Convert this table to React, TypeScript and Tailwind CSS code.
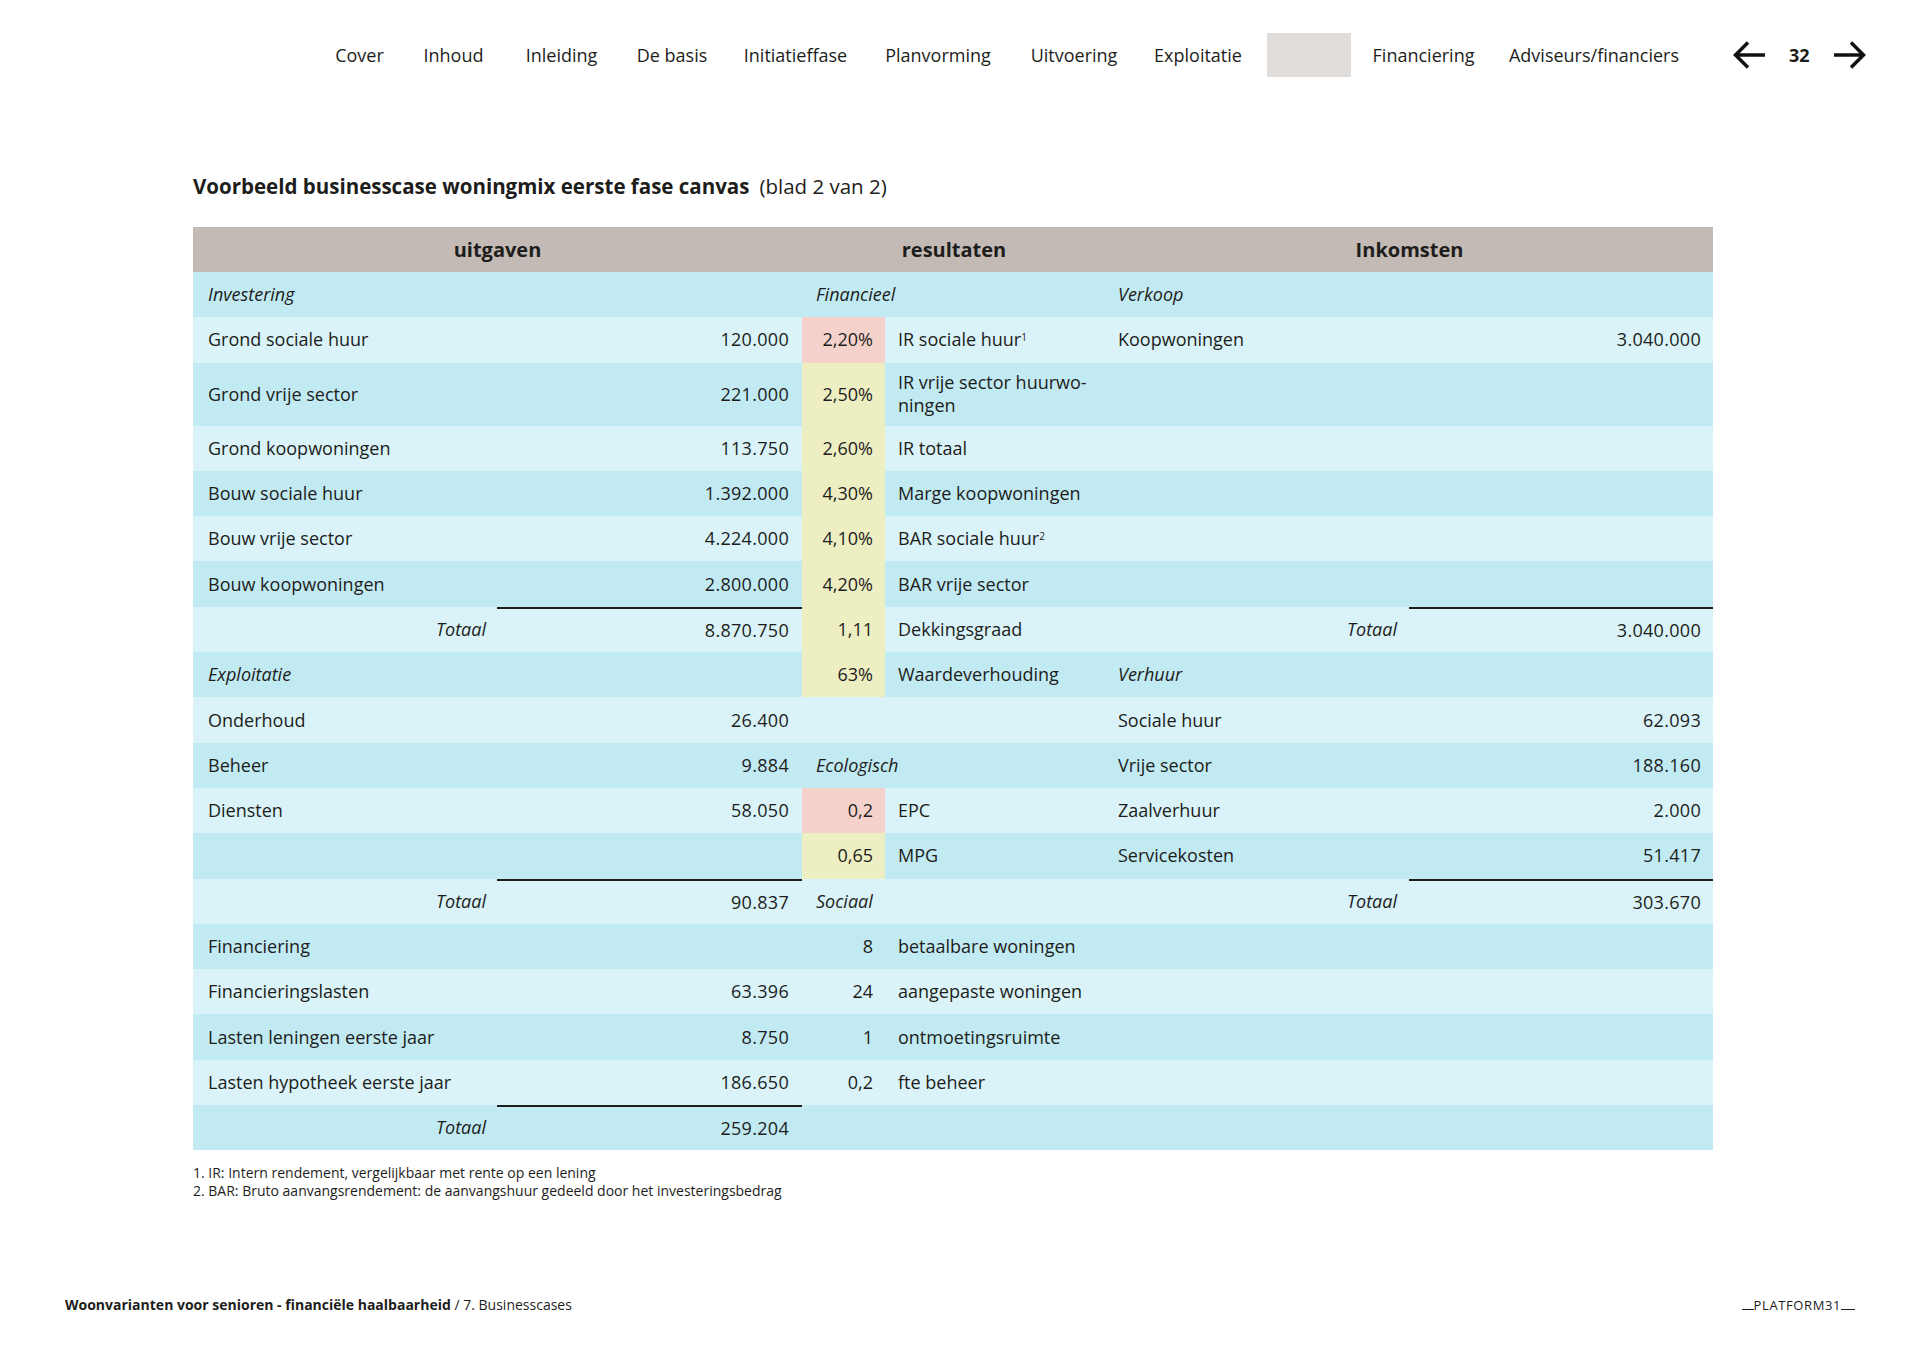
import React from 'react';

type Row = {
  a?: string;
  aItalic?: boolean;
  aTotal?: boolean;
  av?: string;
  bHead?: string;
  bv?: string;
  bColor?: 'pink' | 'yellow';
  bl?: React.ReactNode;
  c?: string;
  cItalic?: boolean;
  cTotal?: boolean;
  cv?: string;
  tall?: boolean;
};

const rows: Row[] = [
  { a: 'Investering', aItalic: true, bHead: 'Financieel', c: 'Verkoop', cItalic: true },
  { a: 'Grond sociale huur', av: '120.000', bv: '2,20%', bColor: 'pink', bl: <>IR sociale huur<sup className="text-[10px]">1</sup></>, c: 'Koopwoningen', cv: '3.040.000' },
  { a: 'Grond vrije sector', av: '221.000', bv: '2,50%', bColor: 'yellow', bl: <>IR vrije sector huurwo-<br />ningen</>, tall: true },
  { a: 'Grond koopwoningen', av: '113.750', bv: '2,60%', bColor: 'yellow', bl: 'IR totaal' },
  { a: 'Bouw sociale huur', av: '1.392.000', bv: '4,30%', bColor: 'yellow', bl: 'Marge koopwoningen' },
  { a: 'Bouw vrije sector', av: '4.224.000', bv: '4,10%', bColor: 'yellow', bl: <>BAR sociale huur<sup className="text-[10px]">2</sup></> },
  { a: 'Bouw koopwoningen', av: '2.800.000', bv: '4,20%', bColor: 'yellow', bl: 'BAR vrije sector' },
  { a: 'Totaal', aTotal: true, av: '8.870.750', bv: '1,11', bColor: 'yellow', bl: 'Dekkingsgraad', c: 'Totaal', cTotal: true, cv: '3.040.000' },
  { a: 'Exploitatie', aItalic: true, bv: '63%', bColor: 'yellow', bl: 'Waardeverhouding', c: 'Verhuur', cItalic: true },
  { a: 'Onderhoud', av: '26.400', c: 'Sociale huur', cv: '62.093' },
  { a: 'Beheer', av: '9.884', bHead: 'Ecologisch', c: 'Vrije sector', cv: '188.160' },
  { a: 'Diensten', av: '58.050', bv: '0,2', bColor: 'pink', bl: 'EPC', c: 'Zaalverhuur', cv: '2.000' },
  { bv: '0,65', bColor: 'yellow', bl: 'MPG', c: 'Servicekosten', cv: '51.417' },
  { a: 'Totaal', aTotal: true, av: '90.837', bHead: 'Sociaal', c: 'Totaal', cTotal: true, cv: '303.670' },
  { a: 'Financiering', bv: '8', bl: 'betaalbare woningen' },
  { a: 'Financieringslasten', av: '63.396', bv: '24', bl: 'aangepaste woningen' },
  { a: 'Lasten leningen eerste jaar', av: '8.750', bv: '1', bl: 'ontmoetingsruimte' },
  { a: 'Lasten hypotheek eerste jaar', av: '186.650', bv: '0,2', bl: 'fte beheer' },
  { a: 'Totaal', aTotal: true, av: '259.204' },
];

const navItems: { label: string; w: string }[] = [
  { label: 'Cover', w: 'w-[87px]' },
  { label: 'Inhoud', w: 'w-[101px]' },
  { label: 'Inleiding', w: 'w-[115px]' },
  { label: 'De basis', w: 'w-[106px]' },
  { label: 'Initiatieffase', w: 'w-[141px]' },
  { label: 'Planvorming', w: 'w-[144px]' },
  { label: 'Uitvoering', w: 'w-[128px]' },
  { label: 'Exploitatie', w: 'w-[120px]' },
];

function TableRow({ r, i }: { r: Row; i: number }) {
  const bg = i % 2 === 0 ? 'bg-[#c1eaf3]' : 'bg-[#d9f3f8]';
  const colored = r.bColor === 'pink' ? 'bg-[#f5d1cc]' : r.bColor === 'yellow' ? 'bg-[#eeeec3]' : '';
  return (
    <div className={`grid grid-cols-[304px_305px_83px_221px_303px_304px] ${r.tall ? 'h-[63px]' : 'h-[45.3px]'} ${bg}`}>
      {r.aTotal ? (
        <div className="flex items-center justify-end pr-[11px] italic">{r.a}</div>
      ) : (
        <div className={`flex items-center pl-[15px] whitespace-nowrap ${r.aItalic ? 'italic' : ''}`}>{r.a}</div>
      )}
      <div className={`flex items-center justify-end pr-[13px] tracking-[0.3px] ${r.aTotal ? 'border-t-2 border-[#1d1d1b]' : ''}`}>{r.av}</div>
      {r.bHead ? (
        <div className="col-span-2 flex items-center pl-[14px] italic">{r.bHead}</div>
      ) : (
        <>
          <div className={`flex items-center justify-end pr-[12px] ${colored}`}>{r.bv}</div>
          <div className="flex items-center pl-[13px] leading-[23px]">
            <span>{r.bl}</span>
          </div>
        </>
      )}
      {r.cTotal ? (
        <div className="flex items-center justify-end pr-[12px] italic">{r.c}</div>
      ) : (
        <div className={`flex items-center pl-[12px] ${r.cItalic ? 'italic' : ''}`}>{r.c}</div>
      )}
      <div className={`flex items-center justify-end pr-[12px] tracking-[0.3px] ${r.cTotal ? 'border-t-2 border-[#1d1d1b]' : ''}`}>{r.cv}</div>
    </div>
  );
}

function Arrow({ dir }: { dir: 'left' | 'right' }) {
  return (
    <svg width="34" height="30" viewBox="0 0 34 30" fill="none" stroke="#111" strokeWidth="3.5" strokeLinecap="butt" strokeLinejoin="miter">
      {dir === 'left' ? (
        <>
          <path d="M33 15H4" />
          <path d="M16 2.5L3.5 15L16 27.5" />
        </>
      ) : (
        <>
          <path d="M1 15H30" />
          <path d="M18 2.5L30.5 15L18 27.5" />
        </>
      )}
    </svg>
  );
}

export default function App() {
  return (
    <div className="w-[1920px] h-[1357px] bg-white flex flex-col text-[#1d1d1b] font-['Open_Sans',sans-serif]">
      <nav className="flex items-center pt-[33px] pl-[316px] h-[77px] text-[18px]">
        {navItems.map((n) => (
          <div key={n.label} className={`${n.w} h-[44px] flex items-center justify-center whitespace-nowrap`}>
            {n.label}
          </div>
        ))}
        <div className="w-[102px] h-[44px] flex justify-center">
          <div className="w-[84px] h-[44px] bg-[#e0dddb]" />
        </div>
        <div className="w-[127px] h-[44px] flex items-center justify-center">Financiering</div>
        <div className="w-[214px] h-[44px] flex items-center justify-center whitespace-nowrap">Adviseurs/financiers</div>
        <div className="flex items-center ml-[31px] h-[44px]">
          <Arrow dir="left" />
          <span className="mx-[23px] font-bold text-[18px]">32</span>
          <Arrow dir="right" />
        </div>
      </nav>

      <div className="pl-[193px] w-[1713px]">
        <h1 className="mt-[95px] text-[20.5px] leading-[28px] whitespace-nowrap">
          <span className="font-bold">Voorbeeld businesscase woningmix eerste fase canvas</span>
          <span className="ml-[10px]">(blad 2 van 2)</span>
        </h1>

        <div className="mt-[27px] w-[1520px] text-[18px]">
          <div className="grid grid-cols-[609px_304px_607px] h-[45px] bg-[#c4bab5] font-bold text-[20px]">
            <div className="flex items-center justify-center">uitgaven</div>
            <div className="flex items-center justify-center">resultaten</div>
            <div className="flex items-center justify-center">Inkomsten</div>
          </div>
          {rows.map((r, i) => (
            <TableRow key={i} r={r} i={i} />
          ))}
        </div>

        <div className="mt-[14px] text-[14px] leading-[18px]">
          <p>1. IR: Intern rendement, vergelijkbaar met rente op een lening</p>
          <p>2. BAR: Bruto aanvangsrendement: de aanvangshuur gedeeld door het investeringsbedrag</p>
        </div>
      </div>

      <footer className="mt-auto mb-[43px] px-[65px] flex items-center justify-between text-[14px] leading-[18px]">
        <p>
          <span className="font-bold">Woonvarianten voor senioren - financiële haalbaarheid</span>
          <span> / 7. Businesscases</span>
        </p>
        <div className="flex items-end tracking-[0.6px] text-[13px]">
          <span className="w-[12px] h-[1.5px] bg-[#1d1d1b] mb-[3px]" />
          <span className="leading-[16px]">PLATFORM31</span>
          <span className="w-[14px] h-[1.5px] bg-[#1d1d1b] mb-[3px]" />
        </div>
      </footer>
    </div>
  );
}
